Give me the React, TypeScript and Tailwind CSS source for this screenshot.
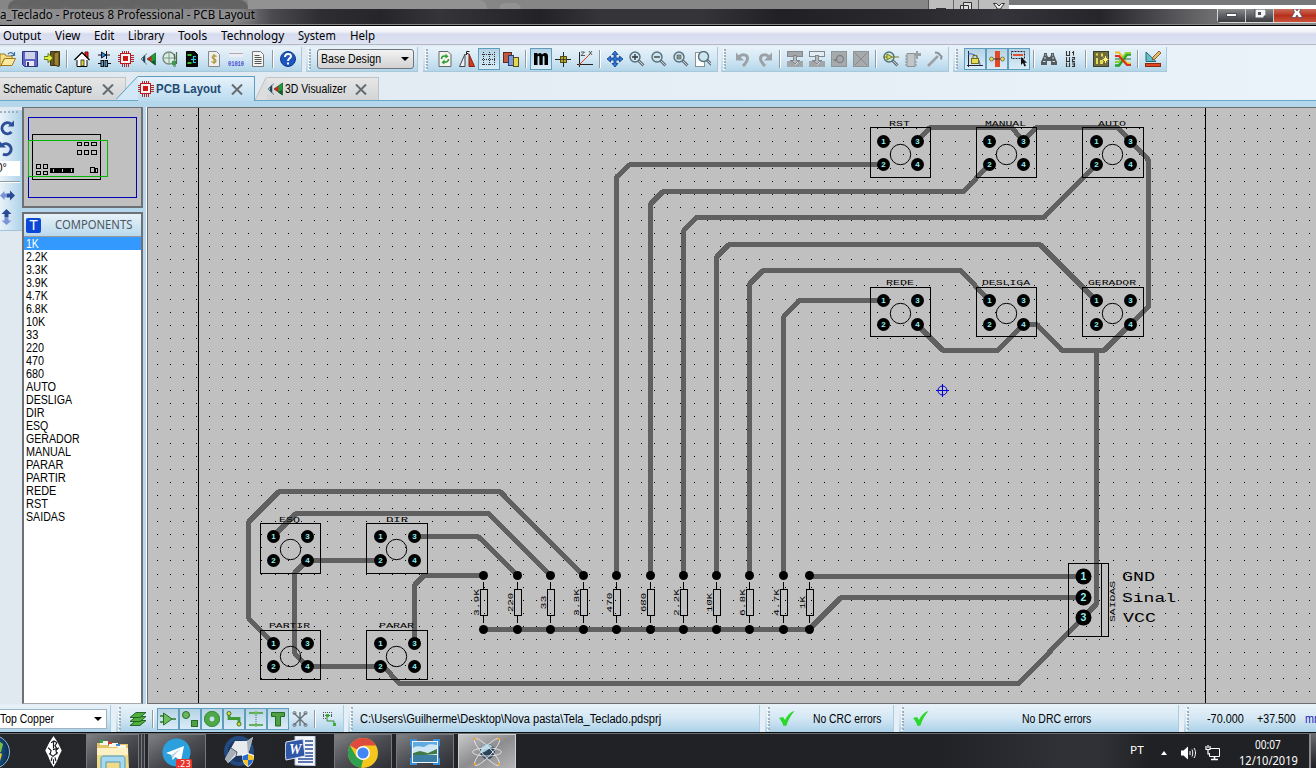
import React, { useLayoutEffect, useRef, useState } from "react";

type Kids = { children?: React.ReactNode };

/* One line of text condensed or widened to a given width. */
function Fit({ w, className = "", children }: { w: number; className?: string } & Kids) {
  const ref = useRef<HTMLSpanElement>(null);
  const [k, setK] = useState(1);
  useLayoutEffect(() => {
    if (ref.current) setK(w / ref.current.offsetWidth);
  }, [w]);
  return (
    <span className={"inline-block shrink-0 whitespace-nowrap " + className} style={{ width: w }}>
      <span ref={ref} className="inline-block origin-left" style={{ transform: `scaleX(${k})` }}>
        {children}
      </span>
    </span>
  );
}

function Ic({ on = false, children }: { on?: boolean } & Kids) {
  return (
    <span
      className={
        "flex h-[22px] w-[22px] shrink-0 items-center justify-center " +
        (on ? "border border-[#5f9dbf] bg-linear-to-b from-[#b5d3e4] to-[#d9ecf7]" : "")
      }
    >
      <svg className="h-4 w-4 shrink-0" viewBox="0 0 16 16" fill="none">
        {children}
      </svg>
    </span>
  );
}

const Sep = () => (
  <span className="flex h-[18px] w-2 shrink-0 justify-center">
    <span className="w-px bg-[#8f9aa3]" />
    <span className="w-px bg-white" />
  </span>
);

const Grip = () => (
  <span className="flex h-full w-[3px] shrink-0 flex-col justify-evenly py-px">
    {[0, 1, 2, 3, 4, 5, 6].map((i) => (
      <span key={i} className="h-[2px] w-[2px] bg-[#a3afb9] shadow-[-1px_1px_0_#fff]" />
    ))}
  </span>
);

const Chip = () => (
  <g shapeRendering="crispEdges">
    <path
      d="M4.500 0v16M6.500 0v16M8.500 0v16M10.500 0v16M0 4.500h16M0 6.500h16M0 8.500h16M0 10.500h16"
      stroke="#a03030"
    />
    <rect x="2.500" y="2.500" width="10" height="10" fill="#f4f4f4" stroke="#c01818" />
    <rect x="5" y="5" width="5" height="5" fill="#d01818" />
  </g>
);

const Eye3D = () => (
  <g>
    <path d="M7 2.500L1 8l6 5.500" stroke="#6b7a80" strokeWidth="1" />
    <path d="M4.500 4.500v7M3.500 6v4" stroke="#1c4a5c" strokeWidth="1.500" />
    <path d="M15.500 2v12L7 8z" fill="#18a038" stroke="#115522" strokeWidth=".7" />
    <path d="M11.500 5v6L7 8z" fill="#d42020" />
    <path d="M11 11l4 3V9z" fill="#0d5a2a" />
  </g>
);

const Lens = ({ inner, stroke = "#53707f", fill = "#cfe4ee" }: { inner?: React.ReactNode; stroke?: string; fill?: string }) => (
  <g>
    <path d="M9.500 9.500l5 5" stroke="#66727a" strokeWidth="3" />
    <path d="M10 10l4.500 4.500" stroke="#c4ccd0" strokeWidth="1" />
    <circle cx="6" cy="6" r="5" fill={fill} stroke={stroke} strokeWidth="1.400" />
    {inner}
  </g>
);

const Undo = () => (
  <g>
    <path d="M4.500 5.500C7 3 12.500 3 12.500 7.500c0 3-2 5-4.500 7.500" stroke="#9ba1a6" strokeWidth="3" />
    <path d="M1 1.500v8h8z" fill="#9ba1a6" />
  </g>
);

const Block = ({ open = false }: { open?: boolean }) => (
  <g shapeRendering="crispEdges">
    <rect x="0.500" y="0.500" width="15" height="5" fill={open ? "#e2ecf2" : "#a2a6a9"} stroke="#83888c" />
    <path d="M0 10h4l4 4 4-4h4v6H0z" fill="#a2a6a9" />
    <path d="M6.500 4v5h-3L8 13l4.500-4h-3V4z" fill="#b6babd" stroke="#83888c" />
  </g>
);

const Close = () => (
  <svg className="h-[11px] w-[12px] shrink-0" viewBox="0 0 12 11">
    <path d="M1 .5l10 10M11 .5l-10 10" stroke="#666b70" strokeWidth="2" />
  </svg>
);

const Bar = ({ className, children }: { className: string } & Kids) => (
  <div
    className={
      "flex h-[25px] shrink-0 items-center border-r border-b border-[#a9c9db] bg-linear-to-b from-[#e8f2f9] via-[#d3e7f4] to-[#b3d6ea] " +
      className
    }
  >
    {children}
  </div>
);

const menu: [string, number][] = [
  ["Output", 38],
  ["View", 25],
  ["Edit", 20],
  ["Library", 36],
  ["Tools", 29],
  ["Technology", 63],
  ["System", 38],
  ["Help", 25],
];

const parts: [string, number][] = [
  ["1K", 13], ["2.2K", 22], ["3.3K", 22], ["3.9K", 22], ["4.7K", 22], ["6.8K", 22], ["10K", 19], ["33", 12],
  ["220", 18], ["470", 18], ["680", 18], ["AUTO", 30], ["DESLIGA", 46], ["DIR", 19], ["ESQ", 22],
  ["GERADOR", 54], ["MANUAL", 45], ["PARAR", 37], ["PARTIR", 40], ["REDE", 30], ["RST", 22], ["SAIDAS", 39],
];

function TopStrip() {
  return (
    <div className="flex h-[9px] shrink-0 bg-[#868686]">
      <div className="ml-2 w-[240px] rounded-t-lg bg-[#646464]" />
      <div className="w-[239px] rounded-tr-lg bg-[#929292]" />
      <div className="ml-[12px] mt-[3px] h-[6px] w-[22px] rounded-t-full bg-[#929292]" />
      <div className="ml-auto flex h-[9px] w-[92px] border-l border-[#555] bg-[#bdbdbd]">
        <div className="flex w-[25px] items-end justify-center border-r border-[#666]">
          <span className="h-px w-[10px] bg-[#333]" />
        </div>
        <div className="flex w-[25px] items-end justify-center border-r border-[#666]">
          <svg className="h-[7px] w-3" viewBox="0 0 12 7" fill="#ddd" stroke="#333">
            <path d="M3.500 7V.5h8V7M.5 7V3.500h8V7" />
          </svg>
        </div>
        <div className="flex flex-1 items-start justify-center border-r border-[#666] pt-[3px]">
          <svg className="h-[6px] w-3" viewBox="0 0 12 6" fill="#eee" stroke="#333">
            <path d="M.5.5h3L6 3 8.500.5h3L8 5v1H4V5z" />
          </svg>
        </div>
      </div>
      <div className="-ml-[11px] h-[9px] w-[307px] border-t-[5px] border-[#77787a] bg-white" />
    </div>
  );
}

function TitleBar() {
  return (
    <div className="flex h-[17px] shrink-0 items-start justify-between border-b border-black bg-[linear-gradient(90deg,#8b8b8d_0px,#858587_235px,#4b4b4f_272px,#2e2e32_320px,#26262a_380px,#343439_440px,#232327_540px,#343439_600px,#343439_700px,#212125_780px,#29292d_900px,#34343a_1000px,#25252a_1100px,#6c6c6f_1210px,#88888a_1316px)] shadow-[inset_0_-1px_0_#85878b]">
      <Fit w={255} className="-mt-[2px] text-[12px] leading-[15px] text-black [text-shadow:0_0_5px_#bbb]">
        a_Teclado - Proteus 8 Professional - PCB Layout
      </Fit>
      <div className="flex h-[14px] w-[99px] rounded-bl-[4px] border-b border-l border-[#d8d8d8] bg-[#66676b]">
        <div className="flex w-[28px] items-center justify-center border-r border-[#ccc] bg-linear-to-b from-[#88898b] to-[#3b3c40]">
          <span className="mb-[2px] h-1 w-[11px] border border-[#4a4c58] bg-white" />
        </div>
        <div className="flex w-[28px] items-start justify-center border-r border-[#ccc] bg-linear-to-b from-[#88898b] to-[#3b3c40]">
          <svg className="h-[10px] w-3" viewBox="0 0 12 10">
            <path d="M3 0h9v7h-2v2H1V0h2" fill="#f4f4f4" stroke="#4a4c58" />
            <path d="M4 3h3v3H4z" fill="#4a4c58" />
          </svg>
        </div>
        <div className="flex flex-1 items-start justify-center bg-linear-to-b from-[#c96a58] via-[#b8301b] to-[#c8513a] pl-[4px]">
          <svg className="h-[9px] w-3" viewBox="0 0 12 9">
            <path d="M2 0l1.500 3L.5 8.500h4L6 6l1.500 2.500h4L8.500 3 10 0H7.500L6 2 4.500 0z" fill="#fff" stroke="#554a58" strokeWidth=".8" />
          </svg>
        </div>
      </div>
    </div>
  );
}

function Toolbars() {
  return (
    <div className="flex h-[29px] shrink-0 items-start overflow-hidden pt-[2px]">
      <Bar className="w-[302px] overflow-hidden">
        <div className="-ml-[3px] flex items-center">
          <Ic>
            <path d="M0 3h5l1 2h6v3H4l-3 7H0z" fill="#f5e08a" stroke="#a07a18" />
            <path d="M1 14.500L4.500 7.500h11L12 14.500z" fill="#fbe9a0" stroke="#a07a18" />
            <path d="M8 3c2-2 4-2 6 1M14.500 1v3.500H11" stroke="#3b6fa0" strokeWidth="1.200" />
          </Ic>
          <Ic>
            <path d="M.5.5h15v15h-13l-2-2z" fill="#6064c4" stroke="#30357f" />
            <rect x="3" y="1" width="10" height="7" fill="#cfd3ea" />
            <rect x="4" y="10" width="8" height="5" fill="#e8e8ee" />
            <rect x="5" y="11" width="2" height="4" fill="#30357f" />
          </Ic>
          <Ic>
            <path d="M6.500.5h9v14h-9z" fill="#6d5a22" stroke="#40340f" />
            <path d="M10 2l5-1.500v15L10 14z" fill="#9c8136" stroke="#40340f" />
            <path d="M0 5.500h4v-3L9 7l-5 4.500v-3H0z" fill="#e6ee3b" stroke="#5a7a20" />
          </Ic>
          <Sep />
          <Ic>
            <path d="M11 1h3v6h-3z" fill="#e02020" stroke="#700" />
            <path d="M3 8h10v7.500H3z" fill="#fff" stroke="#000" />
            <path d="M.5 9L8 1.500 15.500 9" fill="#fff" stroke="#000" strokeWidth="1.300" />
            <rect x="7" y="9" width="3" height="6" fill="#e3d92c" stroke="#222" strokeWidth=".8" />
          </Ic>
          <Ic>
            <path d="M2 4h12M2 12.500h3M11 12.500h4" stroke="#111" />
            <path d="M5.500 1v6L10 4z" fill="#2f8fd0" stroke="#113" />
            <path d="M10.500 0v8" stroke="#111" />
            <rect x="5" y="9.500" width="2.500" height="6" fill="#59a0d0" stroke="#111" />
            <rect x="9" y="9.500" width="2.500" height="6" fill="#59a0d0" stroke="#111" />
          </Ic>
          <Ic>
            <Chip />
          </Ic>
          <Ic>
            <Eye3D />
          </Ic>
          <Ic>
            <circle cx="7" cy="7" r="6" fill="#dceee4" stroke="#7a8a80" strokeWidth="1.400" />
            <path d="M1 7h12M7 1v12" stroke="#7a9a84" />
            <path d="M10 10h4v4h-4z" fill="#3c9c4a" />
            <path d="M14.500 1v12M11 15h3M12.500 3v5" stroke="#4b6a50" strokeWidth="1.200" />
          </Ic>
          <Ic>
            <path d="M2.500.5h8l3 3v12h-11z" fill="#0a0a0a" stroke="#000" />
            <path d="M3.500 3h4v2h-4zM3.500 11h4v2h-4z" fill="#30c030" />
            <path d="M9 5.500h3M9 11.500h3M9.500 5v7M7 8.500h5" stroke="#29c8e8" strokeWidth="1.200" />
          </Ic>
          <Ic>
            <path d="M2.500.5h8l3 3v12h-11z" fill="#eee" stroke="#888" />
            <path d="M10.500 5.500C8 3.500 5.500 5 6.500 7c.7 1.200 3.500.8 3.500 3-.5 2-3 1.800-4.500.5M8 3v10" stroke="#a89838" strokeWidth="1.200" />
          </Ic>
          <Ic>
            <path d="M1 0h14v6H1z" fill="#eceef4" />
            <path d="M1 2.500h14" stroke="#aab" />
            <text x="0" y="14.500" fontSize="8" fontWeight="700" textLength="16" lengthAdjust="spacingAndGlyphs" fill="#4a4ad0" fontFamily="Liberation Mono, monospace">01010</text>
          </Ic>
          <Ic>
            <path d="M2.500.5h8l3 3v12h-11z" fill="#f4f4f4" stroke="#777" />
            <path d="M4.500 4.500h5M4.500 6.500h7M4.500 8.500h7M4.500 10.500h7M4.500 12.500h7" stroke="#555" />
          </Ic>
          <Sep />
          <Ic>
            <circle cx="8" cy="8" r="7.500" fill="#1e56c0" stroke="#123a8c" />
            <path d="M5 6c0-4 6-4 6-.8 0 2-3 2.300-3 4.800" stroke="#fff" strokeWidth="2" />
            <rect x="7" y="11.500" width="2" height="2" fill="#fff" />
          </Ic>
        </div>
      </Bar>
      <Bar className="ml-1 w-[112px] gap-[5px] pl-[3px]">
        <Grip />
        <div className="flex h-[20px] w-[97px] items-center justify-between rounded-[3px] border border-[#6d747a] bg-linear-to-b from-[#f3f3f3] to-[#d2d2d2] px-[3px]">
          <Fit w={60} className="font-['Liberation_Sans',sans-serif] text-[12px]">Base Design</Fit>
          <span className="mr-px border-x-4 border-t-4 border-x-transparent border-t-black" />
        </div>
      </Bar>
      <Bar className="ml-[5px] w-[295px] pl-[3px]">
        <Grip />
        <div className="ml-[5px] flex items-center">
          <Ic>
            <path d="M2 .5h9l3 3v12H2z" fill="#f4f4ee" stroke="#666" />
            <path d="M4.500 8C4.500 5 7 4.500 9.500 5.500M11.500 8c0 3-2.500 3.500-5 2.500" stroke="#2f9c2f" strokeWidth="1.600" />
            <path d="M8.500 2.500v5l3-2zM7.500 8.500v5l-3-2z" fill="#2f9c2f" />
          </Ic>
          <Ic>
            <path d="M6 3v12.500H.5z" fill="#eef" stroke="#444" />
            <path d="M10 3v12.500h5.500z" fill="#d8391d" stroke="#7a2412" />
            <path d="M7.500 4V.5h3M7.500 2.500h2" stroke="#222" />
          </Ic>
          <Ic on>
            <path d="M2.500 1v14M8.500 1v14M13.500 1v14M1 3.500h14M1 8.500h14M1 13.500h14" stroke="#333" strokeDasharray="1 1" shapeRendering="crispEdges" />
          </Ic>
          <Ic>
            <rect x=".5" y="1.500" width="8" height="10" fill="#c05a40" stroke="#5b2a1c" />
            <rect x="5.500" y="4.500" width="5" height="10" fill="#7f9cdc" stroke="#2a3c70" />
            <rect x="10.500" y="6.500" width="5" height="9" fill="#e5d850" stroke="#555018" />
          </Ic>
          <Sep />
          <Ic on>
            <path d="M1 2h3.500v1.500C6 1.500 8 1.500 9 3.500c2-2.500 6-2 6 1.500v9h-3.500V6c0-1.500-1.800-1.500-1.800 0v8H6.400V6c0-1.500-1.900-1.500-1.900 0v8H1z" fill="#000" />
          </Ic>
          <Ic>
            <path d="M0 8.500h16M8.500 1v15" stroke="#222" />
            <rect x="5.500" y="5.500" width="6" height="6" fill="#b8a820" stroke="#555010" />
            <path d="M8.500 5v7M5 8.500h7" stroke="#333" strokeWidth=".8" />
          </Ic>
          <Ic>
            <path d="M2.500 1v15M0 13.500h16" stroke="#222" />
            <path d="M2 14L13 3" stroke="#e04020" />
            <path d="M4 1h3.500L4 4.500h4M12 0l3 4M15 0l-3 4" stroke="#333" strokeWidth=".8" />
          </Ic>
          <Sep />
          <Ic>
            <path d="M8 0l3 3.500H9V7h3.500V5L16 8l-3.500 3V9H9v3.500h2L8 16l-3-3.500h2V9H3.500v2L0 8l3.500-3v2H7V3.500H5z" fill="#2a7ae0" stroke="#143c80" strokeWidth=".8" />
          </Ic>
          <Ic><Lens inner={<path d="M3 6h6M6 3v6" stroke="#333" strokeWidth="1.300" />} /></Ic>
          <Ic><Lens inner={<path d="M3 6h6" stroke="#333" strokeWidth="1.300" />} /></Ic>
          <Ic><Lens inner={<rect x="4" y="4" width="4" height="4" fill="#8a9488" stroke="#555" strokeWidth=".6" />} /></Ic>
          <Ic>
            <rect x=".5" y="1.500" width="9" height="14" fill="#fff" stroke="#333" strokeDasharray="1 1" />
            <g transform="translate(2.500 -.5)"><Lens /></g>
          </Ic>
        </div>
      </Bar>
      <Bar className="ml-[3px] w-[228px] pl-[3px]">
        <Grip />
        <div className="ml-[5px] flex items-center">
          <Ic><Undo /></Ic>
          <Ic><g transform="translate(16 0) scale(-1 1)"><Undo /></g></Ic>
          <Sep />
          <Ic><Block /></Ic>
          <Ic><Block open /></Ic>
          <Ic>
            <rect x=".5" y=".5" width="15" height="15" fill="#a6aaad" stroke="#8f9497" />
            <circle cx="9" cy="8" r="3.500" stroke="#7d8286" strokeWidth="1.300" />
            <path d="M2 8h5l-2.500 3z" fill="#7d8286" />
          </Ic>
          <Ic>
            <rect x=".5" y=".5" width="15" height="15" fill="#a6aaad" stroke="#8f9497" />
            <path d="M2 2l12 12M14 2L2 14" stroke="#858a8e" />
          </Ic>
          <Sep />
          <Ic><Lens fill="#c8e8d0" inner={<path d="M0 6h4M9 6h7M4 3v6l5-3z" stroke="#7a7a20" fill="#d8d860" />} /></Ic>
          <Ic>
            <path d="M2 2.500h8v13H2zM0 5h2M0 8h2M0 11h2M0 14h2M10 11h2M10 14h2" fill="#c2c6c9" stroke="#8b9094" />
            <path d="M9 2h2V0h2v2h3v3h-3v3h-2V5H9z" fill="#9a9fa3" />
          </Ic>
          <Ic>
            <path d="M1 15L11 5" stroke="#9aa0a4" strokeWidth="2.500" />
            <path d="M8 1.500l3 .5 3.500 3.500-.5 3" stroke="#8b9196" strokeWidth="2" />
          </Ic>
        </div>
      </Bar>
      <Bar className="ml-1 w-[214px] pl-[3px]">
        <Grip />
        <div className="ml-[5px] flex items-center">
          <Ic on>
            <path d="M1.500 0v16M0 14.500h16" stroke="#223" />
            <path d="M1 3c7-1 11 3 12 11" stroke="#3a5ac0" />
            <rect x="4.500" y="7.500" width="7" height="5" fill="#e6dc50" stroke="#77701a" />
            <path d="M6 7V4.500h4V7" stroke="#77701a" />
          </Ic>
          <Ic on>
            <path d="M6 0h5v16H6z" fill="#e04828" />
            <path d="M2 8h12" stroke="#333" />
            <circle cx="2.500" cy="8" r="2" fill="#e6dc50" stroke="#665" strokeWidth=".8" />
            <circle cx="13.500" cy="8" r="2" fill="#e6dc50" stroke="#665" strokeWidth=".8" />
          </Ic>
          <Ic on>
            <rect x=".5" y=".5" width="13" height="7" stroke="#223" strokeDasharray="2 1" />
            <path d="M2 4h10" stroke="#e05030" strokeWidth="2" />
            <path d="M10 6v8l2-2 1.500 3.500 1.500-.8-1.500-3H16z" fill="#111" />
          </Ic>
          <Sep />
          <Ic>
            <path d="M3 2h3v2l1 2h2l1-2V2h3v2l3 7v3h-6v-4H6v4H0v-3l3-7z" fill="#565c60" />
            <path d="M2 10.500h2.500M11.500 10.500H14M4 4h1M11 4h1M3 7h2M11 7h2" stroke="#cdd" strokeWidth="1.200" />
          </Ic>
          <Ic>
            <path
              d="M3.500 0v4.500h3V0M9 1.500h1.500V0v4.500M3.500 6v4.500h3V6M9 6.500h2.500v1.700H9.500v2.300h2.500M3.500 11.500V16h3v-4.500M9 12h2.500v3.500H9M9.500 13.700h2"
              stroke="#333"
              strokeWidth="1.100"
            />
          </Ic>
          <Sep />
          <Ic>
            <rect x=".5" y=".5" width="15" height="15" fill="#6f6c40" stroke="#3f3d22" />
            <path d="M3 2.500h2v2H3zM3 7h2v6H3zM8 2.500h2v3H8zM7 9h3v4H7z" fill="#e6dc50" />
            <path d="M12.500 5v7M9.500 8.500h6M10.500 6.500l4 4M14.500 6.500l-4 4" stroke="#fff27a" strokeWidth="1" />
          </Ic>
          <Ic>
            <path d="M0 1.500h4l8 11h4" stroke="#e8c020" strokeWidth="2" />
            <path d="M0 14.500h4l8-11h4" stroke="#2aa02a" strokeWidth="2.500" />
            <path d="M0 11h4l7-9h5" stroke="#8ad030" strokeWidth="1.800" />
            <path d="M0 5h4l8 9h4" stroke="#d83020" strokeWidth="2.200" />
            <path d="M10 8h6M0 8h5" stroke="#1f7a24" strokeWidth="1.200" />
          </Ic>
          <Sep />
          <Ic>
            <path d="M1 1v9.500h10z" fill="#5fc0c8" stroke="#2a6a78" />
            <path d="M7 9l1-3 6-6 2 2-6 6z" fill="#e4b860" stroke="#7a4a20" strokeWidth=".8" />
            <rect x=".5" y="12.500" width="15" height="3" fill="#e04820" stroke="#8a2a10" />
          </Ic>
        </div>
      </Bar>
    </div>
  );
}

function Tabs() {
  return (
    <div className="flex h-[26px] shrink-0 items-end pt-[2px] font-['Liberation_Sans',sans-serif] text-[12px]">
      <div className="-mr-[10px] flex h-[23px] w-[126px] items-center border-t border-r border-[#c0c3c6] bg-linear-to-b from-[#e6e6e6] to-[#d2d4d6] pl-[3px]">
        <Fit w={89}>Schematic Capture</Fit>
        <span className="ml-[10px] flex"><Close /></span>
      </div>
      <svg className="h-[24px] w-[22px] shrink-0" viewBox="0 0 22 24">
        <path d="M0 23.500L21.500.5H22V24H0z" fill="#d3e8f6" />
        <path d="M0 23.500L21.500.5" stroke="#5f9dbf" />
      </svg>
      <div className="relative -mb-px flex h-[25px] w-[117px] items-center border-t border-r border-[#5f9dbf] bg-linear-to-b from-[#e6f2fa] to-[#bbdbef]">
        <svg className="h-[16px] w-[16px] shrink-0" viewBox="0 0 16 16" fill="none"><Chip /></svg>
        <Fit w={65} className="ml-[2px] text-[12.5px] font-bold text-[#1e4a72]">PCB Layout</Fit>
        <span className="ml-[10px] flex"><Close /></span>
      </div>
      <svg className="h-[23px] w-[12px] shrink-0" viewBox="0 0 12 23">
        <path d="M0 23L11 .5h1V23z" fill="#dcdddf" />
        <path d="M0 23L11 .5" stroke="#bfc2c5" />
      </svg>
      <div className="flex h-[23px] w-[112px] items-center border-t border-r border-[#c0c3c6] bg-linear-to-b from-[#e6e6e6] to-[#d2d4d6]">
        <svg className="h-[16px] w-[16px] shrink-0" viewBox="0 0 16 16" fill="none"><Eye3D /></svg>
        <Fit w={61} className="ml-[2px]">3D Visualizer</Fit>
        <span className="ml-[9px] flex"><Close /></span>
      </div>
    </div>
  );
}

function SidePanel() {
  return (
    <>
      <div className="mt-[3px] flex h-[121px] w-[22px] shrink-0 flex-col items-start border-b border-[#9fc3d8] bg-linear-to-r from-[#e8f2f9] to-[#afd3e9]">
        <div className="mb-[7px] mt-px flex gap-[2px]">
          {[0, 1, 2, 3, 4].map((i) => <span key={i} className="h-[2px] w-[2px] bg-[#a3afb9]" />)}
        </div>
        <svg className="h-[16px] w-[15px]" viewBox="0 0 15 16" fill="none">
          <path d="M11.500 12A5.500 5.500 0 1 1 11 4" stroke="#2d4f9a" strokeWidth="3" />
          <path d="M8 6.500h6v-6z" fill="#2d4f9a" />
        </svg>
        <svg className="mt-[5px] h-[16px] w-[15px]" viewBox="0 0 15 16" fill="none">
          <path d="M3 13A5.500 5.500 0 1 0 2 4" stroke="#2d4f9a" strokeWidth="3" />
          <path d="M6 6.500H0v-6z" fill="#2d4f9a" />
        </svg>
        <div className="mt-[4px] h-[15px] w-5 bg-white font-['Liberation_Sans',sans-serif] text-[12px] leading-[14px]">
          <span className="-ml-[4px] inline-block scale-x-90">0°</span>
        </div>
        <div className="mt-[5px] h-[2px] w-5 border-b border-white bg-[#8f9aa3]" />
        <svg className="mt-[7px] h-[11px] w-[15px]" viewBox="0 0 15 11">
          <path d="M7 3.500H4.500V1L0 5.500 4.500 10V7.500H7z" fill="#7a93d6" />
          <path d="M7 3.500h3V.5l5 5-5 5v-3H7z" fill="#2a4a94" />
        </svg>
        <svg className="ml-px mt-[8px] h-[16px] w-[11px]" viewBox="0 0 11 16">
          <path d="M3.500 8V5H.5l5-5 5 5h-3v3z" fill="#2a4a94" />
          <path d="M3.500 8v3.500h-3l5 4.500 5-4.500h-3V8z" fill="#7a93d6" />
        </svg>
      </div>
      <div className="flex w-[121px] shrink-0 flex-col">
        <div className="h-[101px] shrink-0 border-2 border-t border-[#6d7074] bg-[#c0c0c0]">
          <svg className="h-full w-full" viewBox="24 108 117 98" fill="none" shapeRendering="crispEdges">
            <rect x="28.500" y="117.500" width="108" height="80" stroke="#0000b8" />
            <rect x="32.500" y="134.500" width="68" height="45" stroke="#000" />
            {[[77, 142], [84, 142], [91, 142], [77, 150], [84, 150], [91, 150], [36, 164], [43, 164], [36, 171], [43, 171]].map(([x, y]) => (
              <rect key={x + "-" + y} x={x + 0.5} y={y + 0.5} width={x === 91 ? 5 : 4} height={y === 142 || y === 171 ? 3 : 4} stroke="#000" />
            ))}
            <path d="M50 168h24v5H50z" fill="#000" />
            <path d="M53.500 169v3M62.500 169v3M71.500 169v3" stroke="#c0c0c0" />
            <path d="M90.500 167.500h4v5h-4zM95 168h2v4h-2zM97 169.500h1" stroke="#000" />
            <path d="M28.500 140.500h79v36h-79z" stroke="#00b800" />
          </svg>
        </div>
        <div className="h-1 shrink-0 bg-[#b5d7ec]" />
        <div className="flex min-h-0 flex-1 flex-col border-2 border-b border-[#6d7074] border-b-[#aaa] bg-white">
          <div className="flex h-[23px] shrink-0 items-center border-b border-[#999] bg-linear-to-b from-[#e8f2f9] to-[#b9d9ec] pl-[2px]">
            <span className="flex h-[15px] w-[15px] items-center justify-center rounded-[2px] bg-[#0c48d8] font-['Liberation_Sans',sans-serif] text-[14px] leading-none text-white">T</span>
            <Fit w={77} className="ml-[14px] text-[12px] text-[#4c5660]">COMPONENTS</Fit>
          </div>
          <div className="flex flex-col font-['Liberation_Sans',sans-serif] text-[12px]">
            {parts.map(([n, w], i) => (
              <div
                key={n}
                className={"flex h-[13px] items-start pl-[2px] leading-[15px] " + (i === 0 ? "bg-[#3399ff] text-white" : "text-black")}
              >
                <Fit w={w}>{n}</Fit>
              </div>
            ))}
          </div>
        </div>
      </div>
    </>
  );
}

const tracks = [
  "M616.500 575V177L630 164.500H883",
  "M650.500 575V204L663 191.500H964L989 164.500",
  "M683.500 575V231L696 217.500H1044L1096 164.500",
  "M716.500 575V257L729 244.500H1040L1096 300.500",
  "M749.500 575V284L763 270.500H961L989 300.500",
  "M783.500 575V317L799 300.500H883",
  "M917 141L930 127.500H1012L1023 141L1036 127.500H1118L1130 141L1148.500 160V307L1130 324.500L1104 350.500H1062L1037 324.500H1023L998 350.500H943L917 324.500",
  "M1096.500 350V604L1083 617.500L1019 683.500H399L384 666.500H380",
  "M809 576.500H1083",
  "M483 629.500H809L841 597.500H1083",
  "M583.500 575.500L500 491.500H279L248.500 522V618L273 643",
  "M550.500 575.500L488.500 513.500H296L273 536.500",
  "M517.500 575.500L478 536.500H414",
  "M380 560.500H307L294.500 573V653L307 666.500H380",
  "M414.500 643V585L424 575.500H483",
];

type Sw = { n: string; x: number; y: number; w: number; h: number; p: number; q: number; t: number; tw: number };
const switches: Sw[] = [
  { n: "RST", x: 870, y: 127, w: 60, h: 50, p: 13, q: 14, t: 889, tw: 21 },
  { n: "MANUAL", x: 976, y: 127, w: 60, h: 50, p: 13, q: 14, t: 985, tw: 41 },
  { n: "AUTO", x: 1082, y: 127, w: 61, h: 50, p: 14, q: 14, t: 1098, tw: 28 },
  { n: "REDE", x: 870, y: 287, w: 60, h: 49, p: 13, q: 13, t: 886, tw: 28 },
  { n: "DESLIGA", x: 976, y: 287, w: 60, h: 49, p: 13, q: 13, t: 982, tw: 48 },
  { n: "GERADOR", x: 1082, y: 287, w: 61, h: 49, p: 14, q: 13, t: 1088, tw: 48 },
  { n: "ESQ", x: 260, y: 523, w: 60, h: 50, p: 13, q: 13, t: 279, tw: 21 },
  { n: "DIR", x: 366, y: 523, w: 61, h: 50, p: 14, q: 13, t: 386, tw: 22 },
  { n: "PARTIR", x: 260, y: 630, w: 60, h: 49, p: 13, q: 13, t: 269, tw: 41 },
  { n: "PARAR", x: 366, y: 630, w: 61, h: 49, p: 14, q: 13, t: 379, tw: 35 },
];

const resistors: [string, number, number][] = [
  ["3.9K", 483, 27], ["220", 517, 19], ["33", 550, 14], ["3.3K", 583, 27], ["470", 616, 20], ["680", 650, 19],
  ["2.2K", 683, 27], ["10K", 716, 19], ["6.8K", 749, 27], ["4.7K", 783, 27], ["1K", 809, 13],
];

const dots = (() => {
  let d = "";
  for (let j = 0; j < 45; j++)
    for (let i = 0; i < 89; i++)
      d += `M${Math.floor(157.15 + i * 13.095)} ${Math.floor(115.7 + j * 13.095)}h1v1h-1z`;
  return d;
})();

function Pad({ x, y, n, r = 6.5 }: { x: number; y: number; n: number; r?: number }) {
  return (
    <g>
      <circle cx={x} cy={y} r={r} fill="#000" />
      <text x={x} y={y + r * 0.44} textAnchor="middle" fontSize={r > 7 ? 10.5 : 8} fontWeight="700" fill="#8ff0f0">
        {n}
      </text>
    </g>
  );
}

function Board() {
  return (
    <svg className="block h-[595px] w-[1168px]" viewBox="148 108 1168 595" fill="none" fontFamily="Liberation Sans, sans-serif">
      <rect x="148" y="108" width="1168" height="595" fill="#c0c0c0" />
      <path d={dots} fill="#000" shapeRendering="crispEdges" />
      <path d="M198.500 108v595M1205.500 108v595" stroke="#000" shapeRendering="crispEdges" />
      <g stroke="#606060" strokeWidth="5" strokeLinejoin="round" shapeRendering="crispEdges">
        {tracks.map((d) => <path key={d} d={d} />)}
      </g>
      {switches.map((s) => {
        const x1 = s.x + s.p + 0.5;
        const y1 = s.y + s.q + 0.5;
        const y2 = y1 + (s.y === 127 || s.y === 630 ? 23 : 24);
        return (
          <g key={s.n}>
            <rect x={s.x + 0.5} y={s.y + 0.5} width={s.w} height={s.h} stroke="#000" shapeRendering="crispEdges" />
            <circle cx={s.x + 30.5} cy={s.y + (s.y === 127 ? 27.5 : 26.5)} r="10.200" stroke="#000" />
            <Pad x={x1} y={y1} n={1} />
            <Pad x={x1} y={y2} n={2} />
            <Pad x={x1 + 34} y={y1} n={3} />
            <Pad x={x1 + 34} y={y2} n={4} />
            <text
              x={s.t}
              y={s.y - (s.y === 287 || s.y === 630 ? 2 : 1)}
              fontSize="7.500"
              textLength={s.tw}
              lengthAdjust="spacingAndGlyphs"
              fill="#000"
              fontFamily="Liberation Mono, monospace"
            >
              {s.n}
            </text>
          </g>
        );
      })}
      {resistors.map(([n, x, len]) => (
        <g key={n}>
          <path d={`M${x + 0.5} 582v7M${x + 0.5} 616v7`} stroke="#000" shapeRendering="crispEdges" />
          <rect x={x - 2.5} y="589.500" width="7" height="26" stroke="#000" shapeRendering="crispEdges" />
          <circle cx={x + 0.5} cy="575.500" r="4.500" fill="#000" />
          <circle cx={x + 0.5} cy="629.500" r="4.500" fill="#000" />
          <text
            transform={`translate(${x - 4} ${602.5 + len / 2}) rotate(-90)`}
            fontSize="8"
            textLength={len}
            lengthAdjust="spacingAndGlyphs"
            fill="#000"
            fontFamily="Liberation Mono, monospace"
          >
            {n}
          </text>
        </g>
      ))}
      <path d="M1068.500 563.500h40v73h-40zM1101.500 563.500v73" stroke="#000" shapeRendering="crispEdges" />
      <Pad x={1083.5} y={576.5} n={1} r={8} />
      <Pad x={1083.5} y={597.5} n={2} r={8} />
      <Pad x={1083.5} y={617.5} n={3} r={8} />
      <text transform="translate(1115 622) rotate(-90)" fontSize="8" textLength="41" lengthAdjust="spacingAndGlyphs" fill="#000" fontFamily="Liberation Mono, monospace">SAIDAS</text>
      <g fontSize="12" fill="#000" fontFamily="Liberation Mono, monospace">
        <text x="1122" y="581" textLength="33" lengthAdjust="spacingAndGlyphs">GND</text>
        <text x="1122" y="601.500" textLength="54" lengthAdjust="spacingAndGlyphs">Sinal</text>
        <text x="1123" y="622" textLength="33" lengthAdjust="spacingAndGlyphs">VCC</text>
      </g>
      <g stroke="#0000d0">
        <circle cx="942.500" cy="390.500" r="4.500" />
        <path d="M936 390.500h13M942.500 384v13" shapeRendering="crispEdges" />
      </g>
    </svg>
  );
}

const Seg = ({ className, children }: { className: string } & Kids) => (
  <div className={"flex h-full shrink-0 items-center border-r border-[#a9cde2] bg-linear-to-b from-[#e8f2f9] via-[#d3e7f4] to-[#abd1e8] " + className}>
    {children}
  </div>
);

const Check = () => (
  <svg className="h-[15px] w-[16px] shrink-0" viewBox="0 0 16 15">
    <path d="M0 7l4-1 2 3c2-4 5-8 9.500-9C12 4 9 9 7.500 14.500L4.500 15C3.500 12 2 9 0 7z" fill="#2bd82b" />
  </svg>
);

function StatusBar() {
  return (
    <div className="flex h-[29px] shrink-0 overflow-hidden border-b border-[#0c0e10] bg-[#e6eff6] pt-px font-['Liberation_Sans',sans-serif] text-[12px]">
      <Seg className="w-[111px]">
        <div className="flex h-[20px] w-[107px] items-center justify-between border border-l-0 border-[#9fb4c2] bg-white pr-[4px]">
          <Fit w={54}>Top Copper</Fit>
          <span className="border-x-4 border-t-4 border-x-transparent border-t-black" />
        </div>
      </Seg>
      <Seg className="ml-[5px] w-[228px] pl-[3px]">
        <Grip />
        <div className="ml-[5px] flex items-center">
          <Ic>
            {[9.5, 5.500, 1.500].map((y) => (
              <path key={y} d={`M0 ${y + 5}L6 ${y}h10l-6 5z`} fill="#4fae40" stroke="#1d5a1a" strokeWidth=".9" />
            ))}
          </Ic>
          <Sep />
          <Ic on><path d="M0 5h3M0 11h3M12 8h4" stroke="#2c7a28" strokeWidth="1.500" /><path d="M3.500 2v12L12 8z" fill="#6ac05a" stroke="#2c6a28" /></Ic>
          <Ic on><circle cx="4" cy="4" r="3.500" fill="#6ab85a" stroke="#2c6a28" /><rect x="9.500" y="9.500" width="6" height="6" fill="#4fa045" stroke="#2c6a28" /></Ic>
          <Ic on><circle cx="8" cy="8" r="5.200" stroke="#4fa848" strokeWidth="5.500" /><circle cx="8" cy="8" r="7.600" stroke="#2f7c2c" strokeWidth=".7" /></Ic>
          <Ic on>
            <path d="M3 3v4.500h10v5" stroke="#3f9a35" strokeWidth="2.800" />
            <circle cx="3" cy="2.500" r="2" fill="#dcd840" stroke="#3a7a28" /><circle cx="13" cy="13" r="2" fill="#dcd840" stroke="#3a7a28" />
          </Ic>
          <Ic on><path d="M1 2h14M1 14h14" stroke="#3f9a35" strokeWidth="1.300" /><path d="M8 2v12" stroke="#667" strokeDasharray="1 1" /><circle cx="8" cy="2" r="1.800" fill="#6ab85a" /><circle cx="8" cy="14" r="1.800" fill="#6ab85a" /></Ic>
          <Ic on><path d="M1.500 1.500h13v4H10.500V15h-5V5.500h-4z" fill="#4fa045" stroke="#256a22" /></Ic>
          <Ic><path d="M2 2l12 12M14 2L2 14M8 1v14" stroke="#687078" strokeWidth="1.400" /><circle cx="2.500" cy="2" r="1.500" stroke="#687078" /><circle cx="13.500" cy="2" r="1.500" stroke="#687078" /><circle cx="2.500" cy="14" r="1.500" stroke="#687078" /><circle cx="13.500" cy="14" r="1.500" stroke="#687078" /></Ic>
          <Sep />
          <Ic><path d="M1 1.500h9M1 4.500h9M1 7.500h4M1.500 1v7M5.500 1v3M9.500 1v5" stroke="#555" strokeDasharray="1 1" /><path d="M5 5v5h7v4" stroke="#2c8a28" /><rect x="4" y="3" width="3" height="3" fill="#3fae35" /><rect x="11" y="12" width="3" height="3" fill="#3fae35" /></Ic>
        </div>
      </Seg>
      <Seg className="ml-[4px] w-[412px] pl-[3px]">
        <Grip />
        <Fit w={301} className="ml-[6px]">C:\Users\Guilherme\Desktop\Nova pasta\Tela_Teclado.pdsprj</Fit>
      </Seg>
      <Seg className="ml-[5px] w-[129px] pl-[3px]">
        <Grip />
        <span className="ml-[8px] flex"><Check /></span>
        <Fit w={68} className="ml-[18px]">No CRC errors</Fit>
      </Seg>
      <Seg className="ml-[5px] w-[280px] pl-[3px]">
        <Grip />
        <span className="ml-[8px] flex"><Check /></span>
        <Fit w={69} className="ml-[93px]">No DRC errors</Fit>
      </Seg>
      <Seg className="ml-[5px] w-[140px] pl-[3px]">
        <Grip />
        <Fit w={37} className="ml-[17px]">-70.000</Fit>
        <Fit w={39} className="ml-[13px]">+37.500</Fit>
        <Fit w={18} className="ml-[9px] text-[#2323b8]">mm</Fit>
      </Seg>
    </div>
  );
}

const TaskBtn = ({ className, active = false, children }: { className: string; active?: boolean } & Kids) => (
  <div
    className={
      "flex h-[35px] shrink-0 items-start justify-center border-x border-t " +
      (active
        ? "border-[#d0d0d0] bg-linear-to-br from-[#c8c8c9] via-[#8d8d90] to-[#b6b6b8] "
        : "border-[#77787c] bg-linear-to-br from-[#808185] via-[#4c4d52] to-[#2d2e33] ") +
      className
    }
  >
    {children}
  </div>
);

function TaskBar() {
  return (
    <div className="flex h-[35px] shrink-0 overflow-hidden border-t border-[#6b6f74] bg-[linear-gradient(90deg,#26272b_0px,#212226_560px,#212226_940px,#303136_1060px,#303136_1100px,#202124_1150px,#202125_1316px)]">
      <svg className="h-[35px] w-[10px] shrink-0" viewBox="0 0 10 35">
        <defs>
          <radialGradient id="orb" cx="0" cy=".5" r="1"><stop offset="0" stopColor="#5fb0d8" /><stop offset=".6" stopColor="#1c5f96" /><stop offset="1" stopColor="#0c2c50" /></radialGradient>
        </defs>
        <circle cx="-7" cy="18" r="16.500" fill="url(#orb)" stroke="#8fb8d0" />
        <path d="M0 8l3 2-2 8H0z" fill="#7ac142" />
        <path d="M0 19l2 1-2 7z" fill="#f3c32c" />
      </svg>
      <svg className="ml-[34px] mt-[2px] h-[31px] w-[19px] shrink-0" viewBox="0 0 19 32" fill="none">
        <path d="M9.500 0L14 7l4 8-3 6-2 5-3.500 6L6 26l-2-5-3-6 4-8z" fill="#fff" />
        <path d="M7 7l3-2 3 2-2 3 2 3-4 1M9.500 5v8M4 12l3 3-1 4M15 12l-3 3 1 4M5 18l4 3 5-4M8 22l-1 4M11 22l1 4M9.500 24v5" stroke="#1a1b1f" strokeWidth="1.200" />
      </svg>
      <TaskBtn className="ml-[23px] w-[53px]">
        <svg className="mt-[4px] h-[30px] w-[34px]" viewBox="0 0 34 30">
          <path d="M1 4h10l2 3h10l1-2h8v24H1z" fill="#e4c468" />
          <path d="M4 2h8v4H4zM13 4h9v4h-9zM22 6h8v4h-8z" fill="#f8f6ea" />
          <path d="M4 1h3v3H4z" fill="#2cae3c" /><path d="M12 3h4v2h-4z" fill="#d83a2a" /><path d="M20 5h4v2h-4z" fill="#3a8ad8" />
          <path d="M1 9h31l1 21H1z" fill="#f0d987" />
          <path d="M1 9h31v7H1z" fill="#fbf1c4" />
          <path d="M5 30V20c0-2 1-3 3-3h18c2 0 3 1 3 3v10h-5v-7H10v7z" fill="#a8d8ee" stroke="#4a9cc4" />
        </svg>
      </TaskBtn>
      <div className="h-[35px] w-[3px] border-r border-[#77787c] bg-[#3a3b40]" />
      <div className="h-[35px] w-[3px] border-r border-[#77787c] bg-[#3a3b40]" />
      <TaskBtn className="ml-[3px] w-[58px]">
        <svg className="mt-[2px] h-8 w-[32px]" viewBox="0 0 32 32">
          <circle cx="15.500" cy="15.500" r="14" fill="#2ca0dc" />
          <path d="M5 16L23 9l-3 15-5.500-4-3 3L10.500 18z" fill="#fff" />
          <path d="M10.500 18l9.500-7-7 8-1.500 4z" fill="#bcd8e8" />
          <rect x="15" y="22" width="16" height="10" rx="1.500" fill="#e8332a" />
          <text x="16.500" y="30" fontSize="8.500" fill="#fff" textLength="13" fontFamily="Noto Sans, sans-serif">.23</text>
        </svg>
      </TaskBtn>
      <svg className="ml-[17px] mt-px h-[32px] w-[32px] shrink-0" viewBox="0 0 32 32">
        <circle cx="16" cy="16" r="15" fill="#244a80" /><circle cx="16" cy="16" r="11" fill="#193560" />
        <path d="M2 24L12 6l12 0 6-4-5 18-12 1-8 7z" fill="#e8ebee" />
        <path d="M2 24l6-11 6 4-9 11zM24 6l6-4-5 18z" fill="#a6b0b8" />
        <path d="M8 13l6 4-1 4" fill="none" stroke="#333a44" strokeWidth=".8" />
        <path d="M25 18l6 2c0 5-1 9-6 12-5-3-6-7-6-12z" fill="#fff" />
        <path d="M25 19v6h-5c-.4-1-.5-2.500-.5-4zM25 25h5c-.6 2.500-2 4.500-5 6z" fill="#2b6cd0" />
        <path d="M25 19l5.500 2c0 1.500 0 3-.5 4h-5zM25 25v6c-3-1.500-4.400-3.500-5-6z" fill="#f3c422" />
      </svg>
      <svg className="ml-[30px] mt-[2px] h-[30px] w-[31px] shrink-0" viewBox="0 0 31 30">
        <path d="M10 0h20v30l-20-1z" fill="#f4f6fa" stroke="#b8c4dc" />
        <path d="M20 5h8M20 9h8M20 13h8M13 23h15M13 26h15M20 17h8M20 20h8" stroke="#2b4e98" strokeWidth="1.500" />
        <path d="M1 6L18 3l2 17-19 4C0 18 0 12 1 6z" fill="#2e57a8" stroke="#dbe4f4" />
        <text x="4" y="18" fontSize="14" fontWeight="700" fontStyle="italic" fill="#fff" fontFamily="Liberation Serif, serif">W</text>
      </svg>
      <TaskBtn className="ml-[18px] w-[58px]">
        <svg className="mt-[3px] h-[30px] w-[30px]" viewBox="0 0 30 30">
          <circle cx="15" cy="15" r="15" fill="#f4c61e" />
          <path d="M15 15L2 7.500A15 15 0 0 1 28 7.500H15z" fill="#dd4b3e" />
          <path d="M2 7.500L8.500 19 15 22l-2 8A15 15 0 0 1 2 7.500z" fill="#2fa04f" />
          <circle cx="15" cy="15" r="7" fill="#fff" /><circle cx="15" cy="15" r="5.600" fill="#4285f4" />
        </svg>
      </TaskBtn>
      <TaskBtn className="ml-[4px] w-[58px]">
        <svg className="mt-[4px] h-[26px] w-[30px]" viewBox="0 0 30 26">
          <path d="M0 0h7v2h16V0h7v7h-1v12h1v7h-7v-2H7v2H0v-7h1V7H0z" fill="#3a8fd4" />
          <rect x="2" y="2" width="26" height="22" fill="#eef6fb" />
          <rect x="3" y="3" width="24" height="10" fill="#5faae0" />
          <path d="M3 9c6-4 9 1 13-2s7-1 11-1v7H3z" fill="#cfe6f4" />
          <path d="M3 14l7-2 8 2 9-4v5l-24 2z" fill="#3f7a48" />
          <path d="M3 16h24v7H3z" fill="#3d7fa4" />
        </svg>
      </TaskBtn>
      <TaskBtn active className="ml-[4px] w-[58px]">
        <svg className="mt-[2px] h-[30px] w-[30px]" viewBox="0 0 30 30" fill="none">
          <circle cx="15.500" cy="14.500" r="7.500" fill="#2a4358" />
          <path d="M9 11c4-6 9-4 12-1-4 0-6 5-12 6z" fill="#a4ccde" />
          <g stroke="#e2e4e6" strokeWidth=".9">
            <ellipse cx="15" cy="15" rx="18" ry="4.500" transform="rotate(47 15 15)" />
            <ellipse cx="15" cy="15" rx="18" ry="4.500" transform="rotate(-47 15 15)" />
            <ellipse cx="15" cy="15" rx="14.500" ry="4" />
          </g>
          <g fill="#f0a030"><circle cx="3" cy="2" r="1.300" /><circle cx="27" cy="2" r="1.300" /><circle cx="3" cy="27" r="1.300" /><circle cx="27" cy="27" r="1.300" /></g>
        </svg>
      </TaskBtn>
      <div className="ml-auto flex items-start text-white">
        <Fit w={14} className="mt-[7px] text-[11px] leading-[17px]">PT</Fit>
        <span className="ml-[17px] mt-[17px] border-x-[3.5px] border-b-4 border-x-transparent border-b-white" />
        <svg className="ml-[14px] mt-[12px] h-[14px] w-[16px]" viewBox="0 0 16 14" fill="none" stroke="#fff">
          <path d="M0 4.500h2.500L7 .5v13L2.500 9.500H0z" fill="#fff" stroke="none" />
          <path d="M9 5v4M11 3.500c1 2 1 5 0 7M13 2c2 3 2 7 0 10" />
        </svg>
        <svg className="ml-[8px] mt-[11px] h-[16px] w-[16px]" viewBox="0 0 16 16" fill="none" stroke="#fff">
          <path d="M5 3.500h9.500v8H4.500V8" /><path d="M9.500 11v3M6 14.500h7" strokeWidth="1.600" /><path d="M1 1v3.500h4V1M3 0v3M3 5v4h2" strokeWidth="1.200" />
        </svg>
        <div className="ml-[17px] flex w-[60px] flex-col items-center text-[12px]">
          <Fit w={26} className="mt-[2px] leading-[18px]">00:07</Fit>
          <Fit w={59} className="leading-[14px]">12/10/2019</Fit>
        </div>
        <div className="ml-[11px] h-[36px] w-[7px] border-l-2 border-[#8a8b8f] bg-linear-to-b from-[#6a6b70] to-[#1b1c20]" />
      </div>
    </div>
  );
}

export default function App() {
  return (
    <div className="flex h-[768px] w-[1316px] flex-col overflow-hidden bg-linear-to-r from-[#e1e9f0] to-[#ebf3fa] font-['Noto_Sans',sans-serif]">
      <TopStrip />
      <TitleBar />
      <div className="flex h-[19px] shrink-0 items-center gap-[14px] border-b border-[#b4b6c8] bg-[linear-gradient(180deg,#ffffff_0px,#eef0f8_6px,#d6dbee_8px,#e0e5f4_19px)] pl-[3px] pt-[2px] text-[12px] leading-none text-black">
        {menu.map(([m, w]) => (
          <Fit key={m} w={w}>{m}</Fit>
        ))}
      </div>
      <Toolbars />
      <Tabs />
      <div className="h-[7px] shrink-0 border-t border-[#6ca6c8] bg-[#b5d7ec]" />
      <div className="flex min-h-0 flex-1">
        <SidePanel />
        <div className="w-[3px] shrink-0 bg-[#b5d7ec]" />
        <div className="w-px shrink-0 bg-white" />
        <div className="min-w-0 flex-1 border-t border-b border-l border-[#6a6e72]">
          <Board />
        </div>
      </div>
      <StatusBar />
      <TaskBar />
    </div>
  );
}
